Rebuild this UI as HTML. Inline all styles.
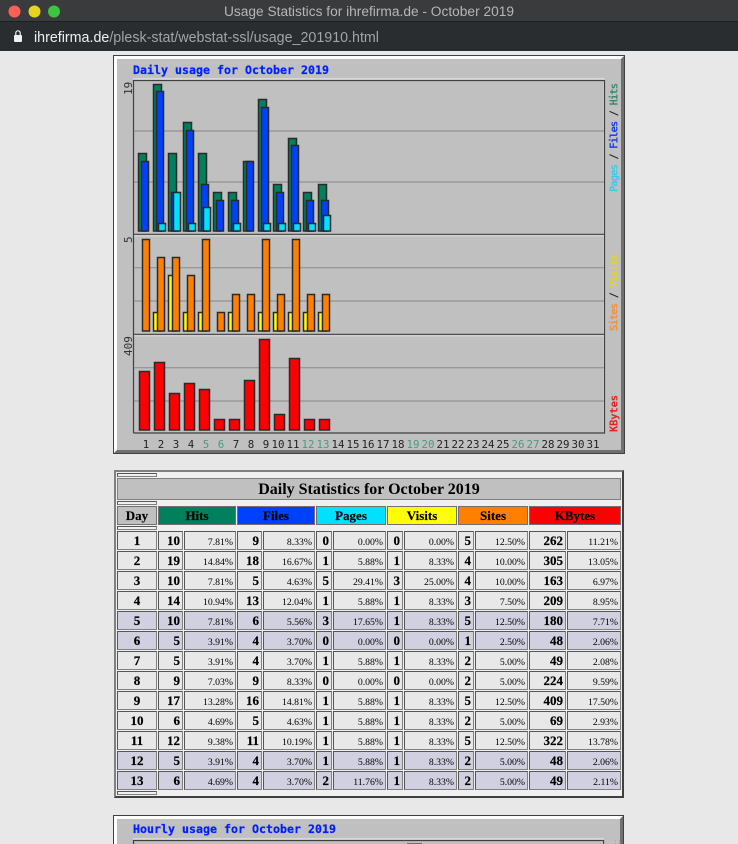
<!DOCTYPE html>
<html><head><meta charset="utf-8"><title>Usage Statistics for ihrefirma.de - October 2019</title>
<style>
html,body{margin:0;padding:0;width:738px;height:844px;overflow:hidden;background:#e8e8e8}
svg{position:absolute;left:0;top:0;filter:blur(.3px)}
table{position:absolute;left:114px;top:470px;border-collapse:separate;border-spacing:1px;table-layout:fixed;width:510px;box-sizing:border-box;background:#f0f0f0;border:2px solid;border-color:#808080 #404040 #404040 #808080;font-family:"Liberation Serif",serif;color:#000;filter:blur(.25px)}
td,th{padding:0;box-sizing:border-box;border:1px solid;border-color:#555 #808080 #808080 #555;background:#e8e8e8;overflow:hidden;white-space:nowrap}
tr.s td{height:4px;font-size:0;line-height:0;background:#f0f0f0}
tr.s td.f{border:0;background:transparent}
tr.t th{height:22px;font-size:16px;line-height:18px;padding-top:1px;background:#c0c0c0;border-color:#808080}
tr.h th{height:19px;font-size:13px;line-height:15px;border-color:#707070;-webkit-text-stroke:.15px #000}
tr.d td{height:19px;line-height:15px}
td.n{font-size:13px;font-weight:bold;text-align:right;padding-right:2px;-webkit-text-stroke:.2px #000}
td.c{font-size:13px;font-weight:bold;text-align:center;-webkit-text-stroke:.2px #000}
tr.d td.p{font-size:9.75px;line-height:13px;padding-top:3px;text-align:right;padding-right:2px}
tr.w td{background:#d0d0e0}
</style></head><body>
<svg width="738" height="844" xmlns="http://www.w3.org/2000/svg">
<rect x="0" y="0" width="738" height="22" fill="#3a3b3d"/>
<rect x="0" y="22" width="738" height="29" fill="#2a2d30"/>
<rect x="0" y="21" width="738" height="1" fill="#1e1f20"/>
<circle cx="14.5" cy="11.5" r="6" fill="#ff5f57"/>
<circle cx="34.5" cy="11.5" r="6" fill="#e6d420"/>
<circle cx="54" cy="11.5" r="6" fill="#3ec43e"/>
<text x="369" y="16" text-anchor="middle" font-family="Liberation Sans,sans-serif" font-size="13.5" fill="#b6b6b6" textLength="290" lengthAdjust="spacingAndGlyphs">Usage Statistics for ihrefirma.de - October 2019</text>
<rect x="14" y="35" width="8" height="7" rx="1" fill="#f0f0f0"/>
<path d="M15.8 35v-2a2.2 2.2 0 0 1 4.4 0v2" fill="none" stroke="#f0f0f0" stroke-width="1.2"/>
<text x="34" y="42" font-family="Liberation Sans,sans-serif" font-size="14.5" fill="#a2a4a6" textLength="345" lengthAdjust="spacingAndGlyphs"><tspan fill="#f0f0f0">ihrefirma.de</tspan>/plesk-stat/webstat-ssl/usage_201910.html</text>

<!-- Daily frame -->
<rect x="113.5" y="55.5" width="511" height="398" fill="#c0c0c0" stroke="#404040"/>
<polygon points="114,56 624,56 621,59 117,59 117,450 114,453" fill="#fff"/>
<polygon points="624,56 624,453 114,453 117,450 621,450 621,59" fill="#707070"/>
<text x="133" y="74" font-family="DejaVu Sans Mono,monospace" font-weight="bold" font-size="11.6" fill="#0020ff" stroke="#0020ff" stroke-width=".25" textLength="196">Daily usage for October 2019</text>

<path d="M133 79h471v354" fill="none" stroke="#f0f0f0" stroke-width="1"/>
<path d="M133.5 433V80.5H604.5V433H133.5" fill="none" stroke="#404040" stroke-width="1.2"/>
<g stroke="#999" stroke-width="1.4">
<path d="M134 131H604M134 182H604M134 267.7H604M134 301H604M134 367.7H604M134 401H604"/>
</g>
<path d="M134 234.5H604M134 334.5H604" stroke="#505050" stroke-width="1.4"/>
<path d="M134 235.8H604M134 335.8H604" stroke="#e8e8e8" stroke-width="1"/>

<g stroke="#2a2a2a" stroke-width="1.5">
<g>
<rect x="138.5" y="153.5" width="8" height="77.5" fill="#00805c"/><rect x="141.5" y="161.5" width="7" height="69.5" fill="#0040ff"/>
<rect x="153.5" y="84.5" width="8" height="146.5" fill="#00805c"/><rect x="156.5" y="91.5" width="7" height="139.5" fill="#0040ff"/><rect x="158.5" y="223.5" width="7" height="7.5" fill="#00e0ff"/>
<rect x="168.5" y="153.5" width="8" height="77.5" fill="#00805c"/><rect x="171.5" y="192.5" width="7" height="38.5" fill="#0040ff"/><rect x="173.5" y="192.5" width="7" height="38.5" fill="#00e0ff"/>
<rect x="183.5" y="122.5" width="8" height="108.5" fill="#00805c"/><rect x="186.5" y="130.5" width="7" height="100.5" fill="#0040ff"/><rect x="188.5" y="223.5" width="7" height="7.5" fill="#00e0ff"/>
<rect x="198.5" y="153.5" width="8" height="77.5" fill="#00805c"/><rect x="201.5" y="184.5" width="7" height="46.5" fill="#0040ff"/><rect x="203.5" y="207.5" width="7" height="23.5" fill="#00e0ff"/>
<rect x="213.5" y="192.5" width="8" height="38.5" fill="#00805c"/><rect x="216.5" y="200.5" width="7" height="30.5" fill="#0040ff"/>
<rect x="228.5" y="192.5" width="8" height="38.5" fill="#00805c"/><rect x="231.5" y="200.5" width="7" height="30.5" fill="#0040ff"/><rect x="233.5" y="223.5" width="7" height="7.5" fill="#00e0ff"/>
<rect x="243.5" y="161.5" width="8" height="69.5" fill="#00805c"/><rect x="246.5" y="161.5" width="7" height="69.5" fill="#0040ff"/>
<rect x="258.5" y="99.5" width="8" height="131.5" fill="#00805c"/><rect x="261.5" y="107.5" width="7" height="123.5" fill="#0040ff"/><rect x="263.5" y="223.5" width="7" height="7.5" fill="#00e0ff"/>
<rect x="273.5" y="184.5" width="8" height="46.5" fill="#00805c"/><rect x="276.5" y="192.5" width="7" height="38.5" fill="#0040ff"/><rect x="278.5" y="223.5" width="7" height="7.5" fill="#00e0ff"/>
<rect x="288.5" y="138.5" width="8" height="92.5" fill="#00805c"/><rect x="291.5" y="145.5" width="7" height="85.5" fill="#0040ff"/><rect x="293.5" y="223.5" width="7" height="7.5" fill="#00e0ff"/>
<rect x="303.5" y="192.5" width="8" height="38.5" fill="#00805c"/><rect x="306.5" y="200.5" width="7" height="30.5" fill="#0040ff"/><rect x="308.5" y="223.5" width="7" height="7.5" fill="#00e0ff"/>
<rect x="318.5" y="184.5" width="8" height="46.5" fill="#00805c"/><rect x="321.5" y="200.5" width="7" height="30.5" fill="#0040ff"/><rect x="323.5" y="215.5" width="7" height="15.5" fill="#00e0ff"/>
</g>
<g>
<rect x="142.5" y="239.5" width="7" height="91.5" fill="#ff8000"/>
<rect x="153.5" y="312.5" width="8" height="18.5" fill="#ffff00"/><rect x="157.5" y="257.5" width="7" height="73.5" fill="#ff8000"/>
<rect x="168.5" y="275.5" width="8" height="55.5" fill="#ffff00"/><rect x="172.5" y="257.5" width="7" height="73.5" fill="#ff8000"/>
<rect x="183.5" y="312.5" width="8" height="18.5" fill="#ffff00"/><rect x="187.5" y="275.5" width="7" height="55.5" fill="#ff8000"/>
<rect x="198.5" y="312.5" width="8" height="18.5" fill="#ffff00"/><rect x="202.5" y="239.5" width="7" height="91.5" fill="#ff8000"/>
<rect x="217.5" y="312.5" width="7" height="18.5" fill="#ff8000"/>
<rect x="228.5" y="312.5" width="8" height="18.5" fill="#ffff00"/><rect x="232.5" y="294.5" width="7" height="36.5" fill="#ff8000"/>
<rect x="247.5" y="294.5" width="7" height="36.5" fill="#ff8000"/>
<rect x="258.5" y="312.5" width="8" height="18.5" fill="#ffff00"/><rect x="262.5" y="239.5" width="7" height="91.5" fill="#ff8000"/>
<rect x="273.5" y="312.5" width="8" height="18.5" fill="#ffff00"/><rect x="277.5" y="294.5" width="7" height="36.5" fill="#ff8000"/>
<rect x="288.5" y="312.5" width="8" height="18.5" fill="#ffff00"/><rect x="292.5" y="239.5" width="7" height="91.5" fill="#ff8000"/>
<rect x="303.5" y="312.5" width="8" height="18.5" fill="#ffff00"/><rect x="307.5" y="294.5" width="7" height="36.5" fill="#ff8000"/>
<rect x="318.5" y="312.5" width="8" height="18.5" fill="#ffff00"/><rect x="322.5" y="294.5" width="7" height="36.5" fill="#ff8000"/>
</g>
<g fill="#ff0000">
<rect x="139.5" y="371.5" width="10" height="58.5"/>
<rect x="154.5" y="362.5" width="10" height="67.5"/>
<rect x="169.5" y="393.5" width="10" height="36.5"/>
<rect x="184.5" y="383.5" width="10" height="46.5"/>
<rect x="199.5" y="389.5" width="10" height="40.5"/>
<rect x="214.5" y="419.5" width="10" height="10.5"/>
<rect x="229.5" y="419.5" width="10" height="10.5"/>
<rect x="244.5" y="380.5" width="10" height="49.5"/>
<rect x="259.5" y="339.5" width="10" height="90.5"/>
<rect x="274.5" y="414.5" width="10" height="15.5"/>
<rect x="289.5" y="358.5" width="10" height="71.5"/>
<rect x="304.5" y="419.5" width="10" height="10.5"/>
<rect x="319.5" y="419.5" width="10" height="10.5"/>
</g>
</g>

<g font-family="DejaVu Sans Mono,monospace" font-size="10.8" fill="#222" text-anchor="middle">
<text x="146" y="448">1</text><text x="161" y="448">2</text><text x="176" y="448">3</text><text x="191" y="448">4</text><text x="206" y="448" fill="#4a9a80">5</text><text x="221" y="448" fill="#4a9a80">6</text><text x="236" y="448">7</text><text x="251" y="448">8</text><text x="266" y="448">9</text>
<text x="278" y="448">10</text><text x="293" y="448">11</text><text x="308" y="448" fill="#4a9a80">12</text><text x="323" y="448" fill="#4a9a80">13</text><text x="338" y="448">14</text><text x="353" y="448">15</text><text x="368" y="448">16</text><text x="383" y="448">17</text><text x="398" y="448">18</text><text x="413" y="448" fill="#4a9a80">19</text><text x="428" y="448" fill="#4a9a80">20</text><text x="443" y="448">21</text><text x="458" y="448">22</text><text x="473" y="448">23</text><text x="488" y="448">24</text><text x="503" y="448">25</text><text x="518" y="448" fill="#4a9a80">26</text><text x="533" y="448" fill="#4a9a80">27</text><text x="548" y="448">28</text><text x="563" y="448">29</text><text x="578" y="448">30</text><text x="593" y="448">31</text>
</g>
<g font-family="DejaVu Sans Mono,monospace" font-size="11" fill="#333">
<text transform="translate(132,95) rotate(-90)">19</text>
<text transform="translate(132,243) rotate(-90)">5</text>
<text transform="translate(132,356) rotate(-90)">409</text>
<text transform="translate(617.5,192) rotate(-90)" textLength="109" font-weight="bold" font-size="10.4"><tspan fill="#40c8e8">Pages</tspan><tspan fill="#222"> / </tspan><tspan fill="#2040e8">Files</tspan><tspan fill="#222"> / </tspan><tspan fill="#3a8a70">Hits</tspan></text>
<text transform="translate(617.5,331) rotate(-90)" textLength="77" font-weight="bold" font-size="10.4"><tspan fill="#f09040">Sites</tspan><tspan fill="#222"> / </tspan><tspan fill="#e0d040">Visits</tspan></text>
<text transform="translate(617.5,432) rotate(-90)" textLength="37" font-weight="bold" font-size="10.4" fill="#e82020">KBytes</text>
</g>

<!-- Hourly frame -->
<rect x="113.5" y="815.5" width="510" height="60" fill="#c0c0c0" stroke="#404040"/>
<polygon points="114,816 623,816 620,819 117,819 117,860 114,860" fill="#fff"/>
<polygon points="623,816 623,860 620,860 620,819" fill="#707070"/>
<text x="133" y="833" font-family="DejaVu Sans Mono,monospace" font-weight="bold" font-size="11.6" fill="#0020ff" stroke="#0020ff" stroke-width=".25" textLength="203">Hourly usage for October 2019</text>
<path d="M133 839h470v20" fill="none" stroke="#f0f0f0" stroke-width="1"/>
<path d="M133.5 860V840.5H603.5V860" fill="none" stroke="#404040" stroke-width="1.2"/>
<rect x="407" y="843" width="15" height="3" fill="#707070"/>
<text x="613" y="844" font-family="DejaVu Sans Mono,monospace" font-size="7" fill="#80a090">::</text>
</svg>

<table>
<colgroup><col style="width:40px"><col style="width:25px"><col style="width:52px"><col style="width:25px"><col style="width:52px"><col style="width:16px"><col style="width:53px"><col style="width:16px"><col style="width:53px"><col style="width:16px"><col style="width:53px"><col style="width:37px"><col style="width:54px"></colgroup>
<tr class="s"><td></td><td class="f" colspan="12"></td></tr>
<tr class="t"><th colspan="13">Daily Statistics for October 2019</th></tr>
<tr class="s"><td></td><td class="f" colspan="12"></td></tr>
<tr class="h"><th style="background:#c0c0c0">Day</th><th colspan="2" style="background:#00805c">Hits</th><th colspan="2" style="background:#0040ff">Files</th><th colspan="2" style="background:#00e0ff">Pages</th><th colspan="2" style="background:#ffff00">Visits</th><th colspan="2" style="background:#ff8000">Sites</th><th colspan="2" style="background:#ff0000">KBytes</th></tr>
<tr class="s"><td></td><td class="f" colspan="12"></td></tr>
<tr class="d"><td class="c">1</td><td class="n">10</td><td class="p">7.81%</td><td class="n">9</td><td class="p">8.33%</td><td class="n">0</td><td class="p">0.00%</td><td class="n">0</td><td class="p">0.00%</td><td class="n">5</td><td class="p">12.50%</td><td class="n">262</td><td class="p">11.21%</td></tr>
<tr class="d"><td class="c">2</td><td class="n">19</td><td class="p">14.84%</td><td class="n">18</td><td class="p">16.67%</td><td class="n">1</td><td class="p">5.88%</td><td class="n">1</td><td class="p">8.33%</td><td class="n">4</td><td class="p">10.00%</td><td class="n">305</td><td class="p">13.05%</td></tr>
<tr class="d"><td class="c">3</td><td class="n">10</td><td class="p">7.81%</td><td class="n">5</td><td class="p">4.63%</td><td class="n">5</td><td class="p">29.41%</td><td class="n">3</td><td class="p">25.00%</td><td class="n">4</td><td class="p">10.00%</td><td class="n">163</td><td class="p">6.97%</td></tr>
<tr class="d"><td class="c">4</td><td class="n">14</td><td class="p">10.94%</td><td class="n">13</td><td class="p">12.04%</td><td class="n">1</td><td class="p">5.88%</td><td class="n">1</td><td class="p">8.33%</td><td class="n">3</td><td class="p">7.50%</td><td class="n">209</td><td class="p">8.95%</td></tr>
<tr class="d w"><td class="c">5</td><td class="n">10</td><td class="p">7.81%</td><td class="n">6</td><td class="p">5.56%</td><td class="n">3</td><td class="p">17.65%</td><td class="n">1</td><td class="p">8.33%</td><td class="n">5</td><td class="p">12.50%</td><td class="n">180</td><td class="p">7.71%</td></tr>
<tr class="d w"><td class="c">6</td><td class="n">5</td><td class="p">3.91%</td><td class="n">4</td><td class="p">3.70%</td><td class="n">0</td><td class="p">0.00%</td><td class="n">0</td><td class="p">0.00%</td><td class="n">1</td><td class="p">2.50%</td><td class="n">48</td><td class="p">2.06%</td></tr>
<tr class="d"><td class="c">7</td><td class="n">5</td><td class="p">3.91%</td><td class="n">4</td><td class="p">3.70%</td><td class="n">1</td><td class="p">5.88%</td><td class="n">1</td><td class="p">8.33%</td><td class="n">2</td><td class="p">5.00%</td><td class="n">49</td><td class="p">2.08%</td></tr>
<tr class="d"><td class="c">8</td><td class="n">9</td><td class="p">7.03%</td><td class="n">9</td><td class="p">8.33%</td><td class="n">0</td><td class="p">0.00%</td><td class="n">0</td><td class="p">0.00%</td><td class="n">2</td><td class="p">5.00%</td><td class="n">224</td><td class="p">9.59%</td></tr>
<tr class="d"><td class="c">9</td><td class="n">17</td><td class="p">13.28%</td><td class="n">16</td><td class="p">14.81%</td><td class="n">1</td><td class="p">5.88%</td><td class="n">1</td><td class="p">8.33%</td><td class="n">5</td><td class="p">12.50%</td><td class="n">409</td><td class="p">17.50%</td></tr>
<tr class="d"><td class="c">10</td><td class="n">6</td><td class="p">4.69%</td><td class="n">5</td><td class="p">4.63%</td><td class="n">1</td><td class="p">5.88%</td><td class="n">1</td><td class="p">8.33%</td><td class="n">2</td><td class="p">5.00%</td><td class="n">69</td><td class="p">2.93%</td></tr>
<tr class="d"><td class="c">11</td><td class="n">12</td><td class="p">9.38%</td><td class="n">11</td><td class="p">10.19%</td><td class="n">1</td><td class="p">5.88%</td><td class="n">1</td><td class="p">8.33%</td><td class="n">5</td><td class="p">12.50%</td><td class="n">322</td><td class="p">13.78%</td></tr>
<tr class="d w"><td class="c">12</td><td class="n">5</td><td class="p">3.91%</td><td class="n">4</td><td class="p">3.70%</td><td class="n">1</td><td class="p">5.88%</td><td class="n">1</td><td class="p">8.33%</td><td class="n">2</td><td class="p">5.00%</td><td class="n">48</td><td class="p">2.06%</td></tr>
<tr class="d w"><td class="c">13</td><td class="n">6</td><td class="p">4.69%</td><td class="n">4</td><td class="p">3.70%</td><td class="n">2</td><td class="p">11.76%</td><td class="n">1</td><td class="p">8.33%</td><td class="n">2</td><td class="p">5.00%</td><td class="n">49</td><td class="p">2.11%</td></tr>
<tr class="s"><td></td><td class="f" colspan="12"></td></tr>
</table>
</body></html>
